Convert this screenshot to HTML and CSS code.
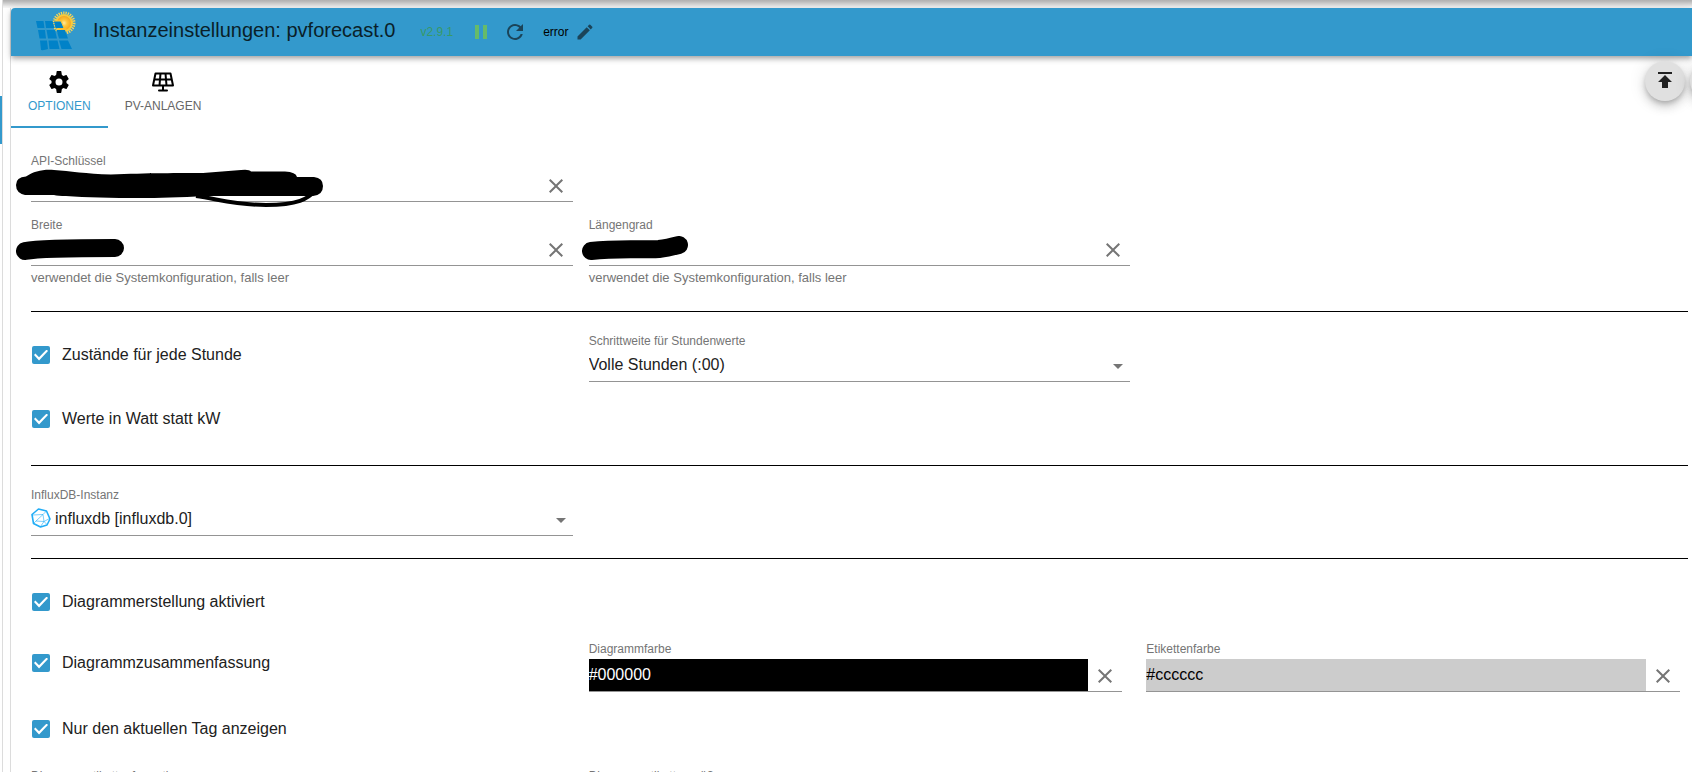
FILE: index.html
```html
<!DOCTYPE html>
<html lang="de">
<head>
<meta charset="utf-8">
<title>Instanzeinstellungen: pvforecast.0</title>
<link rel="stylesheet" href="styles.css">
</head>
<body>
<svg class="symbols" aria-hidden="true">
  <symbol id="close" viewBox="0 0 24 24"><path d="M19 6.41 17.59 5 12 10.59 6.41 5 5 6.41 10.59 12 5 17.59 6.41 19 12 13.41 17.59 19 19 17.59 13.41 12z"/></symbol>
</svg>
<div class="app">
  <nav class="rail" aria-label="Menü"><a class="rail-active" href="#instances" aria-label="Instanzen"></a></nav>
  <main class="stage">
    <div class="topshade"></div>
    <section class="paper">
      <header class="bar">
        <svg class="logo" viewBox="0 0 42 42" aria-hidden="true">
          <defs><radialGradient id="sun"><stop offset="0" stop-color="#ffe9a0"/><stop offset=".45" stop-color="#ffc53a"/><stop offset="1" stop-color="#f5a623"/></radialGradient></defs>
          <circle cx="28" cy="12" r="10" fill="none" stroke="#f7d558" stroke-width="3" stroke-dasharray="1.3 1"/>
          <circle cx="28" cy="12" r="9" fill="#f8ca3c"/>
          <circle cx="28" cy="12" r="7" fill="url(#sun)"/>
          <g fill="#0082c8">
            <path d="M0 10h7.500l1 7H1.500zM9 10h7.500l2 7h-8.500zM18 10h7l3 7h-8.500z"/>
            <path d="M2 19h7l1 8.500H3.500zM10.500 19h8.500l2 8.500h-9zM20.500 19h8.500l3 8.500h-9z"/>
            <path d="M4 29.500h7l1 8.500q-4 1.500-7 1zM12.500 29.500h9l2 8.500h-10zM23 29.500h9l4 8.500H25.500z"/>
          </g>
          <path d="M18 10h7l3 7M19.500 18h11" fill="none" stroke="#f8ca3c"/>
        </svg>
        <h1 class="title">Instanzeinstellungen: pvforecast.0</h1>
        <span class="version">v2.9.1</span>
        <div class="tools">
          <button class="tool pause" aria-label="Pause"><svg viewBox="0 0 24 24"><path d="M6 19h4V5H6zm8-14v14h4V5z"/></svg></button>
          <button class="tool" aria-label="Neu starten"><svg viewBox="0 0 24 24"><path d="M17.650 6.350C16.200 4.900 14.210 4 12 4c-4.420 0-7.990 3.580-7.990 8s3.570 8 7.990 8c3.730 0 6.840-2.550 7.730-6h-2.080c-.820 2.330-3.040 4-5.650 4-3.310 0-6-2.690-6-6s2.690-6 6-6c1.660 0 3.140.690 4.220 1.780L13 11h7V4z"/></svg></button>
        </div>
        <div class="level">
          <span>error</span>
          <button class="tool small" aria-label="Loglevel ändern"><svg viewBox="0 0 24 24"><path d="M3 17.250V21h3.750L17.810 9.940l-3.750-3.750zM20.710 7.040a1 1 0 0 0 0-1.410l-2.340-2.340a1 1 0 0 0-1.410 0l-1.830 1.830 3.750 3.750z"/></svg></button>
        </div>
      </header>
      <div class="fabs">
        <button class="fab" aria-label="Hochladen"><svg viewBox="0 0 24 24"><path d="M5 3h14v2H5zM5 13h4v6h6v-6h4l-7-7z"/></svg></button>
        <button class="fab" aria-label="Herunterladen"></button>
      </div>
      <div class="tabs" role="tablist">
        <button class="tab active" role="tab" aria-selected="true">
          <svg viewBox="0 0 24 24"><path d="M19.430 12.980c.04-.32.07-.64.07-.98s-.03-.66-.07-.98l2.110-1.650c.19-.15.24-.42.12-.64l-2-3.460c-.12-.22-.39-.3-.61-.22l-2.490 1c-.52-.4-1.080-.73-1.690-.98l-.38-2.650C14.460 2.180 14.250 1 14 1h-4c-.25 0-.46 1.180-.49 1.420l-.38 2.650c-.61.25-1.170.59-1.690.98l-2.490-1c-.23-.09-.49 0-.61.22l-2 3.460c-.13.22-.07.49.12.64l2.110 1.650c-.04.32-.07.65-.07.98s.03.66.07.98l-2.110 1.650c-.19.15-.24.42-.12.64l2 3.460c.12.22.39.3.61.22l2.490-1c.52.4 1.080.73 1.690.98l.38 2.650c.03.24.24 1.420.49 1.420h4c.25 0 .46-1.180.49-1.420l.38-2.650c.61-.25 1.170-.59 1.690-.98l2.490 1c.23.09.49 0 .61-.22l2-3.460c.12-.22.07-.49-.12-.64zM12 15.500a3.500 3.500 0 1 1 0-7 3.500 3.500 0 0 1 0 7z"/></svg>
          <span>OPTIONEN</span>
        </button>
        <button class="tab" role="tab" aria-selected="false">
          <svg viewBox="0 0 24 24" fill="none" stroke="#000" stroke-width="2" stroke-linejoin="round" stroke-linecap="round"><path d="M4.500 3.500h15l2.500 12H2zM3.300 9.500h17.400M9.500 3.500l-1 12M14.500 3.500l1 12M12 15.500v5M8 20.500h8" /></svg>
          <span>PV-ANLAGEN</span>
        </button>
      </div>

      <form class="form">
        <div class="group first">
          <div class="row">
            <div class="field">
              <label for="api">API-Schlüssel</label>
              <div class="control"><input id="api" type="text"><button type="button" class="clear" aria-label="Löschen"><svg><use href="#close"/></svg></button></div>
              <svg class="scribble api" viewBox="0 0 310 44" aria-hidden="true">
                <path d="M10 7.500C18 2 28 0 38 1C54 2 70 5 95 5.500C130 4 165 4 187 4L225 1Q233 0 235 2.500H269Q280 3 281 8H298Q307 9 307 17Q307 26 297 27H190Q150 29 125 29Q80 29 50 27Q42 27 38 26H9Q0 24 0 16Q0 8 10 7.500Z"/>
                <path d="M180 27C202 30 220 36 250 36C282 36 292 30 300 21" fill="none" stroke="#000" stroke-width="4"/>
              </svg>
            </div>
          </div>
          <div class="row">
            <div class="field">
              <label for="lat">Breite</label>
              <div class="control"><input id="lat" type="text"><button type="button" class="clear" aria-label="Löschen"><svg><use href="#close"/></svg></button></div>
              <p class="help">verwendet die Systemkonfiguration, falls leer</p>
              <svg class="scribble lat" viewBox="0 0 110 24" aria-hidden="true"><path d="M9 14C25 11 60 11 99 11" fill="none" stroke="#000" stroke-width="18" stroke-linecap="round"/></svg>
            </div>
            <div class="field">
              <label for="lon">Längengrad</label>
              <div class="control"><input id="lon" type="text"><button type="button" class="clear" aria-label="Löschen"><svg><use href="#close"/></svg></button></div>
              <p class="help">verwendet die Systemkonfiguration, falls leer</p>
              <svg class="scribble lon" viewBox="0 0 110 26" aria-hidden="true"><path d="M9 15C35 12 55 14 77 13Q85 12 97 9" fill="none" stroke="#000" stroke-width="18" stroke-linecap="round"/></svg>
            </div>
          </div>
        </div>
        <hr>
        <div class="group">
          <div class="row">
            <label class="check"><input type="checkbox" checked><span>Zustände für jede Stunde</span></label>
            <div class="field">
              <label for="step">Schrittweite für Stundenwerte</label>
              <div class="control"><select id="step"><option>Volle Stunden (:00)</option></select><svg class="arrow" viewBox="0 0 24 24"><path d="M7 10l5 5 5-5z"/></svg></div>
            </div>
          </div>
          <div class="row">
            <label class="check"><input type="checkbox" checked><span>Werte in Watt statt kW</span></label>
          </div>
        </div>
        <hr>
        <div class="group instance">
          <div class="row">
            <div class="field">
              <label for="influx">InfluxDB-Instanz</label>
              <div class="control">
                <svg class="influx" viewBox="0 0 20 20" fill="none" stroke="#22adf6" stroke-linejoin="round" aria-hidden="true"><path d="M7.500 1 15.500 3 19 11 16 17 9.500 19 2.500 15.500 1 6.500z" stroke-width="1.600"/><path d="M12 6.500 5 13l8 .5zM12 6.500 15.500 3M5 13l-2 2M13 13.500l3 3M12 6.500 2 7M13 13.500l-3.500 5M13 13.500l5.500-3" stroke-width=".600"/></svg>
                <select id="influx"><option>influxdb [influxdb.0]</option></select><svg class="arrow" viewBox="0 0 24 24"><path d="M7 10l5 5 5-5z"/></svg>
              </div>
            </div>
          </div>
        </div>
        <hr>
        <div class="group">
          <div class="row compact">
            <label class="check"><input type="checkbox" checked><span>Diagrammerstellung aktiviert</span></label>
          </div>
          <div class="row">
            <label class="check"><input type="checkbox" checked><span>Diagrammzusammenfassung</span></label>
            <div class="field color">
              <label for="chart">Diagrammfarbe</label>
              <div class="control"><input id="chart" class="black" type="text" value="#000000"><button type="button" class="clear" aria-label="Löschen"><svg><use href="#close"/></svg></button></div>
            </div>
            <div class="field color">
              <label for="tag">Etikettenfarbe</label>
              <div class="control"><input id="tag" class="silver" type="text" value="#cccccc"><button type="button" class="clear" aria-label="Löschen"><svg><use href="#close"/></svg></button></div>
            </div>
          </div>
          <div class="row compact">
            <label class="check"><input type="checkbox" checked><span>Nur den aktuellen Tag anzeigen</span></label>
          </div>
          <div class="row">
            <div class="field">
              <label for="format">Diagrammetikettenformatierung</label>
              <div class="control"><input id="format" type="text"></div>
            </div>
            <div class="field">
              <label for="size">Diagrammetikettengröße</label>
              <div class="control"><input id="size" type="text"></div>
            </div>
          </div>
        </div>
      </form>
    </section>
  </main>
</div>
</body>
</html>
```

FILE: styles.css
```css
* { box-sizing: border-box; }
body {
  margin: 0;
  height: 100vh;
  overflow: hidden;
  background: #fff;
  color: #212121;
  font: 16px/20px "Liberation Sans", Arial, sans-serif;
}
button { margin: 0; padding: 0; border: 0; background: none; font: inherit; color: inherit; }
svg { display: block; fill: currentColor; }
svg[fill="none"] { fill: none; }
.symbols { position: absolute; width: 0; height: 0; }

.app { display: flex; height: 100vh; }
.rail { width: 3px; flex: none; border-right: 1px solid #dcdcdc; padding-top: 96px; }
.rail-active { display: block; height: 48px; background: #3399cc; }
.stage { flex: 1; min-width: 0; padding-left: 7px; }
.topshade { height: 8px; margin-left: -7px; background: linear-gradient(#b0b0b0, #bcbcbc 20%, #f4f4f4 90%); }
.paper { border-left: 1px solid #dcdcdc; }

.bar {
  position: relative;
  display: flex;
  align-items: center;
  height: 48px;
  padding-left: 25px;
  background: #3399cc;
  border-top-left-radius: 4px;
  box-shadow: 0 2px 4px -1px rgba(0,0,0,.2), 0 4px 5px rgba(0,0,0,.14), 0 1px 10px rgba(0,0,0,.12);
  color: #0b2430;
}
.logo { width: 42px; height: 42px; }
.title { margin: 0 25px 4px 15px; font-size: 20px; line-height: 24px; font-weight: 400; color: #0a1f29; }
.version { font-size: 12px; color: #389a68; }
.tools { display: flex; gap: 10px; margin-left: 16px; }
.tool svg { width: 24px; height: 24px; color: #1b4459; }
.tool.pause svg { color: #66bb6a; }
.tool.small svg { width: 20px; height: 20px; }
.level { display: flex; align-items: center; gap: 7px; margin-left: 16px; font-size: 12px; color: #000; }

.fabs { position: absolute; top: 61px; right: -38px; display: flex; gap: 5px; overflow: visible; }
.fab {
  display: grid;
  place-items: center;
  width: 40px;
  height: 40px;
  border-radius: 50%;
  background: #e0e0e0;
  box-shadow: 0 3px 5px -1px rgba(0,0,0,.2), 0 6px 10px rgba(0,0,0,.14), 0 1px 18px rgba(0,0,0,.12);
}
.fab svg { width: 24px; height: 24px; }

.tabs { display: flex; height: 72px; }
.tab {
  display: flex;
  flex-direction: column;
  align-items: center;
  gap: 2px;
  padding: 14px 17px 0;
  font-size: 12px;
  color: #666;
}
.tab svg { width: 24px; height: 24px; color: #000; }
.tab.active { border-bottom: 2px solid #3399cc; color: #3399cc; }

.form { padding: 16px 4px 0 20px; }
.row {
  display: grid;
  grid-template-columns: repeat(3, 1fr);
  column-gap: 16px;
  min-height: 64px;
  padding-top: 9px;
  align-items: start;
}
.row.compact { min-height: 61px; }
hr { margin: 13px 0 12px; border: 0; border-top: 1px solid #000; }
.group.first { padding-bottom: 11px; }
.group.instance { padding-bottom: 3px; }

.field { position: relative; min-width: 0; }
.field label { display: block; font-size: 12px; line-height: 16px; color: #757575; }
.control { position: relative; display: flex; height: 33px; border-bottom: 1px solid #949494; }
.control input, .control select {
  flex: 1;
  min-width: 0;
  margin: 0;
  padding: 0;
  border: 0;
  border-radius: 0;
  outline: 0;
  appearance: none;
  background: transparent;
  font: inherit;
  color: #212121;
}
.clear { display: grid; place-items: center; width: 34px; padding-top: 1px; color: #757575; }
.clear svg { width: 24px; height: 24px; }
.arrow { position: absolute; right: 0; top: 5px; width: 24px; height: 24px; color: #757575; pointer-events: none; }
.influx { width: 20px; height: 20px; margin: 5px 4px 0 0; }
.help { margin: 3px 0 0; font-size: 13px; line-height: 18px; color: #757575; }
.color { padding-right: 8px; padding-bottom: 6px; }
.color label { margin-bottom: 2px; }
.control .black { background: #000; color: #fff; }
.control .silver { background: #ccc; color: #000; }

.scribble { position: absolute; left: -15px; color: #000; pointer-events: none; }
.scribble.api { top: 16px; width: 310px; height: 44px; }
.scribble.lat { top: 20px; width: 110px; height: 24px; }
.scribble.lon { top: 19px; left: -7px; width: 110px; height: 26px; }

.check { display: flex; align-items: center; gap: 12px; height: 44px; }
.check input {
  appearance: none;
  width: 18px;
  height: 18px;
  margin: 0 0 0 1px;
  border-radius: 2px;
  background: #3399cc;
  display: grid;
  place-items: center;
}
.check input::before {
  content: "";
  width: 14px;
  height: 11px;
  background: #fff;
  clip-path: polygon(0 50%, 10% 37%, 36% 70%, 90% 0, 100% 13%, 36% 100%);
}
```
